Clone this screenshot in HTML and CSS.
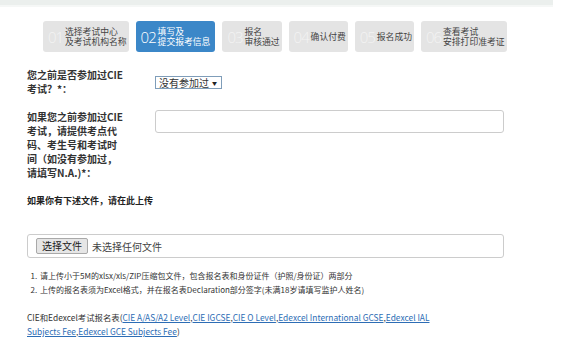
FILE: index.html
```html
<!DOCTYPE html>
<html lang="zh-CN">
<head>
    <meta charset="UTF-8">
    <meta name="viewport" content="width=device-width, initial-scale=1.0">
    <title>填写及提交报考信息</title>
    <link rel="stylesheet" href="styles.css">
</head>
<body>
    <div class="topbar"></div>

    <div class="page">
        <!-- 报名步骤 -->
        <ol class="steps">
            <li class="step"><span class="step-num">01</span><span class="step-text">选择考试中心<br>及考试机构名称</span></li>
            <li class="step active"><span class="step-num">02</span><span class="step-text">填写及<br>提交报考信息</span></li>
            <li class="step"><span class="step-num">03</span><span class="step-text">报名<br>审核通过</span></li>
            <li class="step"><span class="step-num">04</span><span class="step-text">确认付费</span></li>
            <li class="step"><span class="step-num">05</span><span class="step-text">报名成功</span></li>
            <li class="step"><span class="step-num">06</span><span class="step-text">查看考试<br>安排打印准考证</span></li>
        </ol>

        <form class="apply-form">
            <div class="form-row">
                <label class="form-label" for="prevExam">您之前是否参加过CIE考试？*：</label>
                <div class="form-field">
                    <span class="select-wrap">
                        <select id="prevExam" class="prev-select">
                            <option>没有参加过</option>
                            <option>参加过</option>
                        </select>
                    </span>
                </div>
            </div>

            <div class="form-row">
                <label class="form-label" for="prevInfo">如果您之前参加过CIE考试，请提供考点代码、考生号和考试时间（如没有参加过，请填写N.A.)*：</label>
                <div class="form-field">
                    <input id="prevInfo" class="text-input" type="text">
                </div>
            </div>

            <p class="upload-note">如果你有下述文件，请在此上传</p>

            <div class="file-box">
                <button type="button" class="file-btn">选择文件</button>
                <span class="file-name">未选择任何文件</span>
            </div>

            <ol class="upload-rules">
                <li>请上传小于5M的xlsx/xls/ZIP压缩包文件，包含报名表和身份证件（护照/身份证）两部分</li>
                <li>上传的报名表须为Excel格式，并在报名表Declaration部分签字(未满18岁请填写监护人姓名)</li>
            </ol>

            <p class="form-links">CIE和Edexcel考试报名表(<a href="#">CIE A/AS/A2 Level</a>,<a href="#">CIE IGCSE</a>,<a href="#">CIE O Level</a>,<a href="#">Edexcel International GCSE</a>,<a href="#">Edexcel IAL Subjects Fee</a>,<a href="#">Edexcel GCE Subjects Fee</a>)</p>
        </form>
    </div>
</body>
</html>
```

FILE: styles.css
```css
body {
    font-family: "Noto Sans CJK SC", "Noto Sans", sans-serif;
    background-color: #fff;
    margin: 0;
    padding: 0;
    color: #333;
}

.topbar {
    width: 553px;
    height: 5px;
    background-color: #ebefed;
    border-bottom: 2px solid #f5f7f6;
}

.page {
    padding: 0 73px 0 27px;
}

/* steps */

.steps {
    list-style: none;
    margin: 14px 0 16px 16px;
    padding: 0;
    display: flex;
    gap: 7px;
}

.step {
    display: flex;
    align-items: center;
    height: 31px;
    padding: 0 2px 0 5px;
    background-color: #e4e4e4;
    border-radius: 3px;
    color: #444;
}

.step-num {
    flex: none;
    width: 16px;
    margin-right: 1px;
    overflow: visible;
    font-family: "Open Sans", sans-serif;
    font-weight: 300;
    font-size: 15px;
    letter-spacing: -1px;
    color: #f3f3f3;
}

.step-text {
    font-size: 8.8px;
    line-height: 10px;
    white-space: nowrap;
}

.step.active {
    padding-right: 5px;
    background-color: #3b87c8;
    color: #fff;
}

.step.active .step-num {
    color: #fff;
}

/* form */

.form-row {
    display: flex;
    align-items: flex-start;
    margin-bottom: 14px;
}

.form-label {
    width: 99px;
    margin-right: 29px;
    font-size: 10px;
    font-weight: bold;
    line-height: 14px;
    color: #333;
}

.form-field {
    flex: 1;
}

.select-wrap {
    position: relative;
    display: inline-block;
    margin-top: 2px;
}

.select-wrap::after {
    content: "\25BC";
    position: absolute;
    right: 5px;
    top: 3px;
    font-size: 5px;
    color: #222;
    pointer-events: none;
}

.prev-select {
    appearance: none;
    -webkit-appearance: none;
    display: block;
    width: 67px;
    height: 13px;
    padding: 0 0 0 3px;
    border: 1px solid #7f9db9;
    border-radius: 0;
    background-color: #fff;
    font-family: inherit;
    font-size: 10px;
    line-height: 11px;
    color: #333;
}

.text-input {
    display: block;
    box-sizing: border-box;
    width: 100%;
    height: 23px;
    border: 1px solid #ccc;
    border-radius: 3px;
    margin: 0;
}

.upload-note {
    margin: 5px 0 26px;
    font-size: 9px;
    font-weight: bold;
    line-height: 14px;
    color: #222;
}

.file-box {
    box-sizing: border-box;
    height: 24px;
    display: flex;
    align-items: center;
    padding: 0 8px;
    border: 1px solid #ccc;
    border-radius: 3px;
}

.file-btn {
    height: 16px;
    padding: 0 5px;
    background-color: #e6e6e6;
    border: 1px solid #a9a9a9;
    border-radius: 2px;
    font-family: inherit;
    font-size: 10px;
    line-height: 14px;
    color: #222;
    cursor: pointer;
}

.file-name {
    margin-left: 4px;
    font-size: 10px;
    color: #444;
}

.upload-rules {
    margin: 11px 0 13px;
    padding: 0 0 0 12px;
    font-size: 8px;
    line-height: 14px;
    color: #333;
}

.upload-rules li {
    padding-left: 1px;
}

.form-links {
    width: 420px;
    margin: 0;
    font-size: 8.4px;
    line-height: 14px;
    color: #333;
}

.form-links a {
    color: #2d6db5;
}
```
